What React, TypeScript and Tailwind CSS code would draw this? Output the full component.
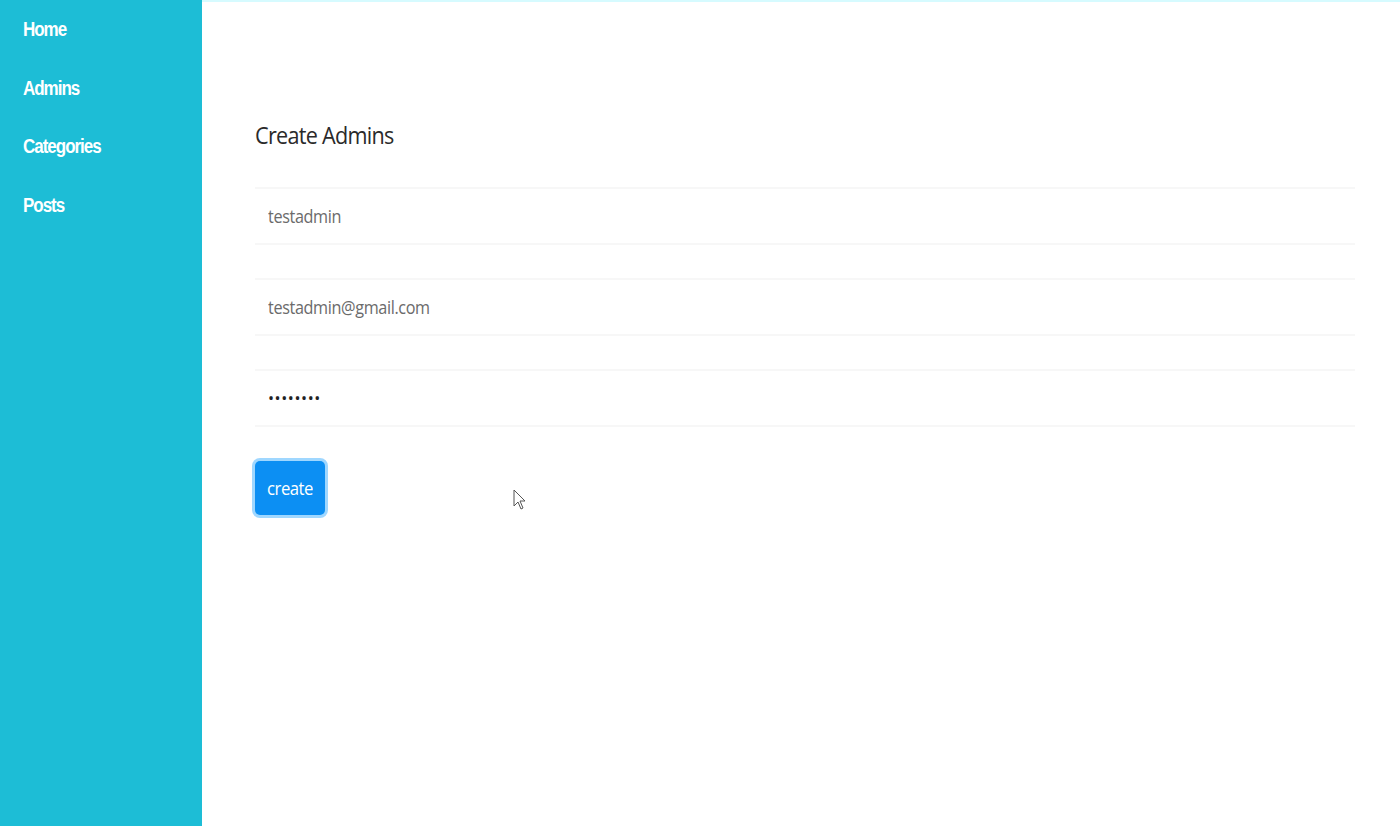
import React from "react";

export default function App() {
  const nav = ["Home", "Admins", "Categories", "Posts"];
  return (
    <div
      className="relative flex w-[1400px] h-[826px] bg-white overflow-hidden"
      style={{ fontFamily: "'Open Sans', 'Liberation Sans', sans-serif" }}
    >
      <aside className="w-[202px] shrink-0 h-full bg-[#1dbdd6] pt-[14px] pl-[23px]">
        <ul className="flex flex-col">
          {nav.map((n) => (
            <li
              key={n}
              className="h-[58.5px] text-white text-[20px] leading-[30px] tracking-[-1.2px] font-semibold origin-left scale-x-[0.85]"
              style={{ fontFamily: "'Liberation Sans', sans-serif" }}
            >
              {n}
            </li>
          ))}
        </ul>
      </aside>
      <main className="relative flex-1 h-full">
        <div className="h-[2px] bg-[#d6fbff]" />
        <div className="pl-[53px] pt-[118px] w-[1153px]">
          <h1 className="text-[24px] leading-[30px] text-[#2a2a2a] tracking-[-0.8px] origin-left scale-x-[0.9]">
            Create Admins
          </h1>
          <div className="mt-[37px] flex flex-col gap-[33px]">
            <div className="h-[58px] border-y-2 border-[#f7f7f7] flex items-center pl-[13px] text-[18px] text-[#6b6b6b] tracking-[-0.4px]">
              <span className="origin-left scale-x-[0.9]">testadmin</span>
            </div>
            <div className="h-[58px] border-y-2 border-[#f7f7f7] flex items-center pl-[13px] text-[18px] text-[#6b6b6b] tracking-[-0.4px]">
              <span className="origin-left scale-x-[0.9]">testadmin@gmail.com</span>
            </div>
            <div className="h-[58px] border-y-2 border-[#f7f7f7] flex items-center pl-[13px] text-[16px] text-[#222] tracking-[0.6px]">
              ••••••••
            </div>
          </div>
          <button className="mt-[34px] w-[70px] h-[54px] rounded-[5px] bg-[#0c8ff3] text-white text-[19px] ring-[3px] ring-[#9fd7ff] flex items-center justify-center tracking-[-0.6px]">
            <span className="scale-x-[0.88]">create</span>
          </button>
        </div>
        <svg
          className="absolute left-[311px] top-[489px]"
          width="14"
          height="22"
          viewBox="0 0 14 22"
        >
          <path
            d="M1 1 L1 17 L5 13 L8 20 L10 19 L7 12 L12 12 Z"
            fill="white"
            stroke="#555"
            strokeWidth="1"
            strokeLinejoin="round"
          />
        </svg>
      </main>
    </div>
  );
}
